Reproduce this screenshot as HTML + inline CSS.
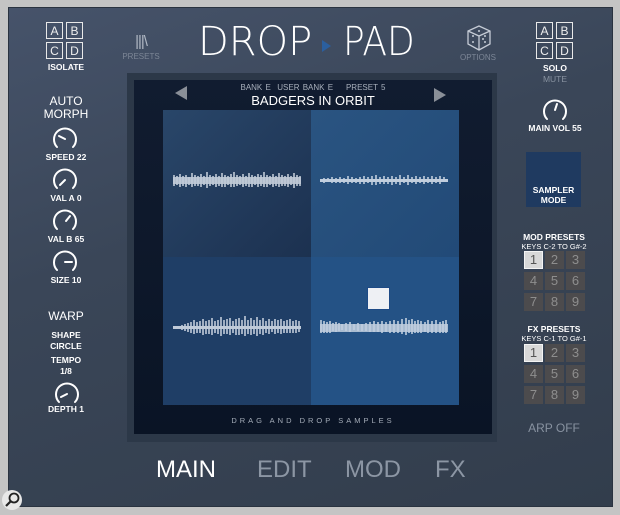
<!DOCTYPE html><html><head><meta charset="utf-8"><style>
*{margin:0;padding:0;box-sizing:border-box}
body{width:620px;height:515px;background:#c4c4c4;position:relative;overflow:hidden;font-family:"Liberation Sans",sans-serif;color:#fff}
.panel{position:absolute;left:8px;top:7px;width:605px;height:500px;background:linear-gradient(160deg,#46536a 0%,#3a4658 40%,#323d4c 100%);border:1px solid #2a3340}
.a{position:absolute;text-align:center;font-weight:bold;font-size:8.5px}
.abcd{position:absolute;width:38px;height:38px}
.abcd div{position:absolute;width:17px;height:17px;border:1px solid #e8e8e8;font-size:12px;font-weight:normal;text-align:center;line-height:16px;color:#eee}
.g{position:absolute;width:19px;height:18px;background:#4c4b4d;color:#8e8e8e;font-size:13px;text-align:center;line-height:18px}
.g.on{background:#d8d8d8;color:#555;border:1px solid #f4f4f4;line-height:16px}
.tab{position:absolute;top:456px;font-size:24px;color:#8c96a4}
.t{position:absolute;top:20px;font-family:"DejaVu Sans","Liberation Sans",sans-serif;font-weight:200;font-size:40px;color:#fff;line-height:44px}
</style></head><body>
<div class="panel"></div>
<div class="abcd" style="left:46px;top:22px"><div style="left:0;top:0">A</div><div style="left:20px;top:0">B</div><div style="left:0;top:20px">C</div><div style="left:20px;top:20px">D</div></div>
<div class="a" style="left:40px;top:62px;width:52px">ISOLATE</div>
<div class="abcd" style="left:536px;top:22px"><div style="left:0;top:0">A</div><div style="left:20px;top:0">B</div><div style="left:0;top:20px">C</div><div style="left:20px;top:20px">D</div></div>
<div class="a" style="left:530px;top:63px;width:50px">SOLO</div>
<div class="a" style="left:530px;top:74px;width:50px;font-weight:normal;color:#8892a0">MUTE</div>
<div class="a" style="left:118px;top:33px;width:46px;font-size:15px;font-weight:normal;color:#b0b8c4;letter-spacing:-1px">|||\</div>
<div class="a" style="left:118px;top:52px;width:46px;font-weight:normal;color:#7c8696;font-size:8px">PRESETS</div>
<div class="t" style="left:198px">DROP</div>
<div style="position:absolute;left:322px;top:40px;width:0;height:0;border-left:9px solid #2b5f9e;border-top:6px solid transparent;border-bottom:6px solid transparent"></div>
<div class="t" style="left:343px;transform:scaleX(0.9);transform-origin:left">PAD</div>
<svg style="position:absolute;left:465px;top:24px" width="28" height="28" viewBox="0 0 28 28"><path d="M14 2L25 7V20L14 26L3 20V7Z M3 7L14 12L25 7 M14 12V26" fill="none" stroke="#c6ccd6" stroke-width="1.3"/><g fill="#c6ccd6"><circle cx="14" cy="7" r="1"/><circle cx="8" cy="12" r="1"/><circle cx="8" cy="18" r="1"/><circle cx="20" cy="12" r="1"/><circle cx="20" cy="18" r="1"/><circle cx="18" cy="15" r="1"/></g></svg>
<div class="a" style="left:455px;top:53px;width:46px;font-weight:normal;color:#7c8696;font-size:8px">OPTIONS</div>
<div class="a" style="left:38px;top:95px;width:56px;font-size:12px;font-weight:normal;line-height:13px">AUTO<br>MORPH</div>
<svg style="position:absolute;left:0;top:0" width="620" height="515">
<g fill="none" stroke="#fff" stroke-width="2" stroke-linecap="round">
<path d="M57 147 A11 11 0 1 1 73 147"/><line x1="65" y1="139" x2="59" y2="136"/>
<path d="M57 188 A11 11 0 1 1 73 188"/><line x1="65" y1="180" x2="60" y2="185"/>
<path d="M57 229 A11 11 0 1 1 73 229"/><line x1="66" y1="221" x2="70" y2="216"/>
<path d="M57 270 A11 11 0 1 1 73 270"/><line x1="65" y1="262" x2="72" y2="262"/>
<path d="M59 402 A11 11 0 1 1 75 402"/><line x1="67" y1="394" x2="61" y2="397"/>
<path d="M547 119 A11 11 0 1 1 563 119"/><line x1="555" y1="110" x2="557" y2="104"/>
</g></svg>
<div class="a" style="left:38px;top:152px;width:56px">SPEED 22</div>
<div class="a" style="left:38px;top:193px;width:56px">VAL A 0</div>
<div class="a" style="left:38px;top:234px;width:56px">VAL B 65</div>
<div class="a" style="left:38px;top:275px;width:56px">SIZE 10</div>
<div class="a" style="left:38px;top:309px;width:56px;font-size:12px;font-weight:normal">WARP</div>
<div class="a" style="left:38px;top:330px;width:56px;line-height:11px">SHAPE<br>CIRCLE</div>
<div class="a" style="left:38px;top:355px;width:56px;line-height:11px">TEMPO<br>1/8</div>
<div class="a" style="left:38px;top:404px;width:56px">DEPTH 1</div>
<div class="a" style="left:522px;top:123px;width:66px">MAIN VOL 55</div>
<div style="position:absolute;left:526px;top:152px;width:55px;height:55px;background:#1f3a60"></div>
<div class="a" style="left:526px;top:185px;width:55px;line-height:10px">SAMPLER<br>MODE</div>
<div class="a" style="left:518px;top:232px;width:72px">MOD PRESETS</div>
<div class="a" style="left:518px;top:242px;width:72px;font-weight:normal;font-size:7.5px">KEYS C-2 TO G#-2</div>
<div class="a" style="left:518px;top:324px;width:72px">FX PRESETS</div>
<div class="a" style="left:518px;top:334px;width:72px;font-weight:normal;font-size:7.5px">KEYS C-1 TO G#-1</div>
<div class="g on" style="left:524px;top:251px">1</div><div class="g" style="left:545px;top:251px">2</div><div class="g" style="left:566px;top:251px">3</div>
<div class="g" style="left:524px;top:272px">4</div><div class="g" style="left:545px;top:272px">5</div><div class="g" style="left:566px;top:272px">6</div>
<div class="g" style="left:524px;top:293px">7</div><div class="g" style="left:545px;top:293px">8</div><div class="g" style="left:566px;top:293px">9</div>
<div class="g on" style="left:524px;top:344px">1</div><div class="g" style="left:545px;top:344px">2</div><div class="g" style="left:566px;top:344px">3</div>
<div class="g" style="left:524px;top:365px">4</div><div class="g" style="left:545px;top:365px">5</div><div class="g" style="left:566px;top:365px">6</div>
<div class="g" style="left:524px;top:386px">7</div><div class="g" style="left:545px;top:386px">8</div><div class="g" style="left:566px;top:386px">9</div>
<div class="a" style="left:518px;top:421px;width:72px;font-size:12px;font-weight:normal;color:#8892a0">ARP OFF</div>
<div style="position:absolute;left:127px;top:73px;width:370px;height:369px;background:#2c3848"></div>
<div style="position:absolute;left:134px;top:80px;width:358px;height:354px;background:linear-gradient(#111c30,#0a1425)"></div>
<div style="position:absolute;left:175px;top:86px;width:0;height:0;border-right:12px solid #8a8f98;border-top:7px solid transparent;border-bottom:7px solid transparent"></div>
<div style="position:absolute;left:434px;top:88px;width:0;height:0;border-left:12px solid #8a8f98;border-top:7px solid transparent;border-bottom:7px solid transparent"></div>
<div class="a" style="left:200px;top:83px;width:226px;font-weight:normal;color:#a8b0bc;font-size:8px;word-spacing:1px">BANK E &nbsp;USER BANK E &nbsp;&nbsp; PRESET 5</div>
<div class="a" style="left:200px;top:93px;width:226px;font-weight:normal;font-size:13px">BADGERS IN ORBIT</div>
<div style="position:absolute;left:163px;top:110px;width:148px;height:147px;background:linear-gradient(135deg,#294669,#1c3150)"></div>
<div style="position:absolute;left:311px;top:110px;width:148px;height:147px;background:linear-gradient(135deg,#2a5481,#224a77)"></div>
<div style="position:absolute;left:163px;top:257px;width:148px;height:148px;background:#1f3e66"></div>
<div style="position:absolute;left:311px;top:257px;width:148px;height:148px;background:#245285"></div>
<div style="position:absolute;left:367px;top:287px;width:23px;height:23px;background:#eef0f4;border:1px solid #1d4a86"></div>
<svg style="position:absolute;left:0;top:0" width="620" height="515"><g stroke="#e8eef6" stroke-width="1.6" opacity="0.8">
<rect x="173" y="177" width="128" height="7" fill="#e8eef6" stroke="none" opacity="0.9"/>
<path d="M174 175v11M177 176v9M180 174v13M183 176v10M186 175v12M189 177v8M192 173v14M195 175v11M198 176v10M201 174v13M204 176v9M207 172v16M210 175v11M213 176v9M216 174v13M219 176v10M222 173v14M225 175v12M228 176v9M231 174v13M234 172v15M237 175v11M240 176v9M243 174v13M246 176v10M249 173v14M252 175v12M255 176v9M258 174v13M261 175v11M264 172v15M267 175v12M270 176v9M273 174v13M276 176v10M279 173v14M282 175v11M285 176v10M288 174v13M291 176v9M294 173v15M297 175v11M300 176v10"/>
<rect x="320" y="179" width="128" height="3" fill="#e8eef6" stroke="none"/>
<path d="M324 178v5M328 178v4M332 177v6M336 178v5M340 177v6M344 178v5M348 176v8M352 177v6M356 178v5M360 177v7M364 176v8M368 177v6M372 176v9M376 175v10M380 177v7M384 176v8M388 177v7M392 176v9M396 177v7M400 175v10M404 177v6M408 175v10M412 177v6M416 176v8M420 177v6M424 176v8M428 177v6M432 176v8M436 177v6M440 176v8M444 177v5"/>
<rect x="173" y="326" width="128" height="3" fill="#e8eef6" stroke="none"/>
<path d="M182 325v5M185 324v7M188 323v9M191 322v11M194 320v14M197 322v11M200 321v12M203 319v16M206 321v13M209 320v14M212 318v17M215 321v12M218 320v14M221 317v19M224 320v14M227 319v15M230 318v17M233 321v12M236 319v16M239 318v17M242 320v14M245 316v20M248 320v14M251 318v17M254 320v14M257 317v19M260 320v14M263 318v17M266 321v12M269 319v15M272 321v11M275 319v15M278 320v13M281 319v15M284 321v12M287 320v13M290 319v14M293 321v12M296 320v13M299 321v11"/>
<rect x="320" y="324" width="128" height="8" fill="#e8eef6" stroke="none" opacity="0.85"/>
<path d="M321 320v13M324 321v12M327 322v11M330 321v12M333 323v8M336 322v10M339 323v8M342 324v6M346 323v8M350 322v10M354 324v6M358 323v8M362 324v7M366 323v8M370 322v10M374 321v11M378 322v10M382 321v12M386 322v10M390 321v12M394 320v13M398 321v12M402 319v15M406 318v17M409 320v13M412 319v15M415 321v12M418 320v13M421 321v12M425 322v10M428 320v13M432 321v12M436 320v13M440 322v11M443 321v12M446 320v13"/>
</g></svg>
<div class="a" style="left:134px;top:416px;width:358px;font-weight:normal;font-size:7.5px;letter-spacing:3px;color:#a4acb8">DRAG AND DROP SAMPLES</div>
<div class="tab" style="left:156px;color:#fff">MAIN</div>
<div class="tab" style="left:257px">EDIT</div>
<div class="tab" style="left:345px">MOD</div>
<div class="tab" style="left:435px">FX</div>
<div style="position:absolute;left:2px;top:490px;width:20px;height:20px;border-radius:50%;background:#e8e8e8"></div>
<svg style="position:absolute;left:2px;top:490px" width="20" height="20"><circle cx="12" cy="8" r="4.5" fill="none" stroke="#222" stroke-width="1.8"/><line x1="9" y1="11" x2="4" y2="16" stroke="#222" stroke-width="2.2"/></svg>
</body></html>
